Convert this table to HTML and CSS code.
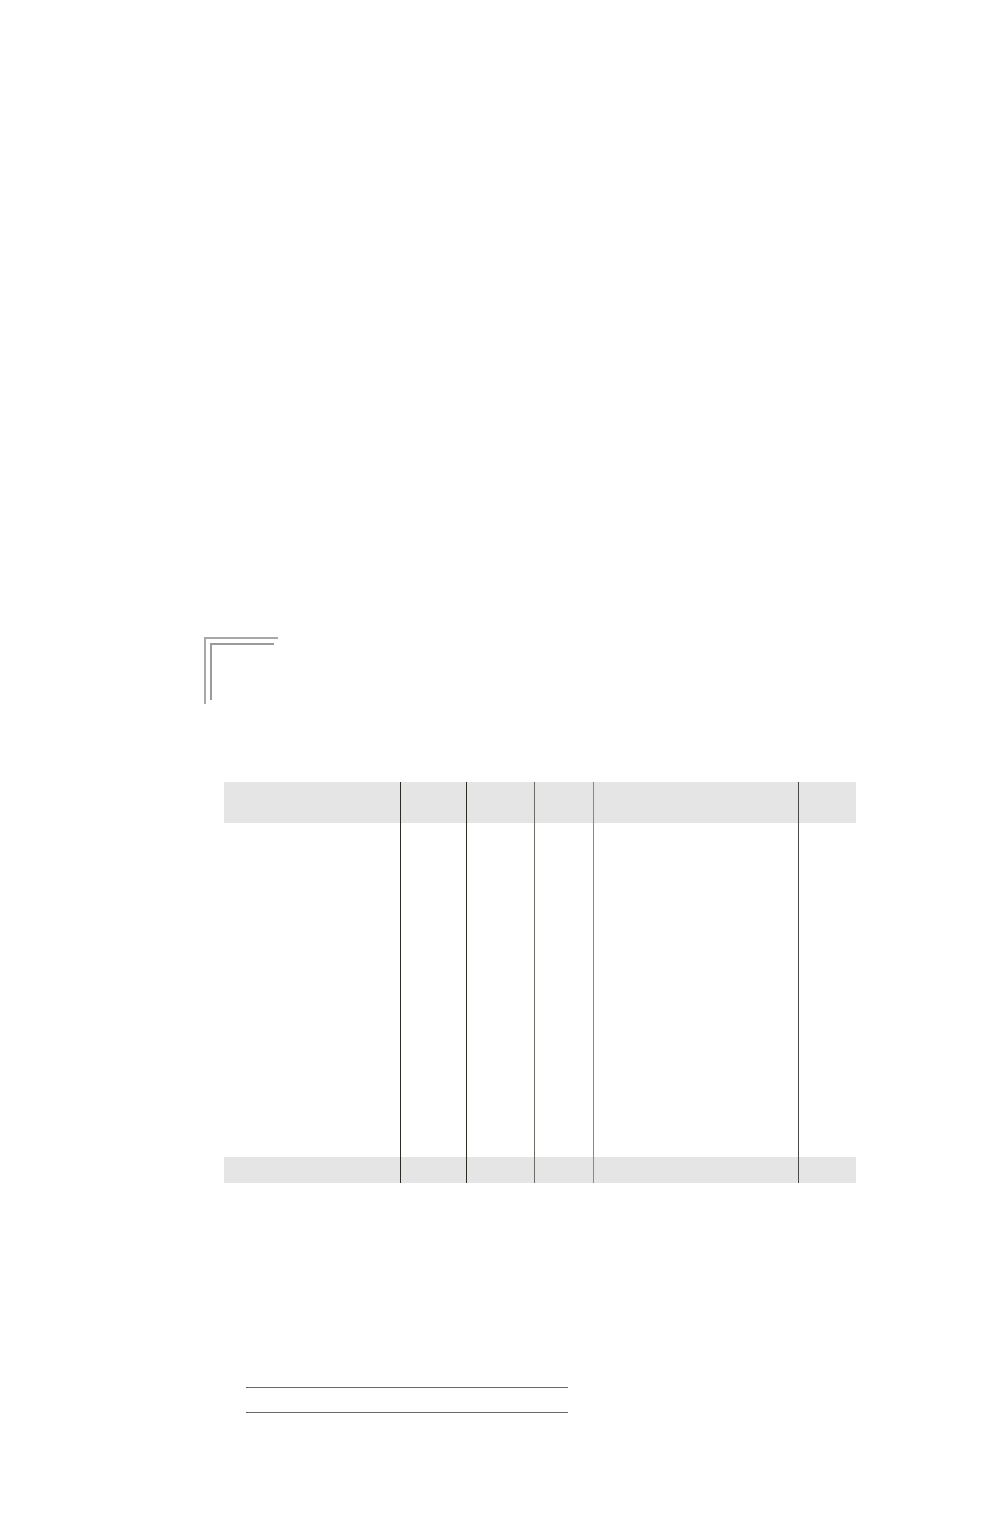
FILE: index.html
```html
<!DOCTYPE html>
<html>
<head>
<meta charset="utf-8">
<link rel="stylesheet" href="styles.css">
</head>
<body>
<div class="page">
  <div class="corner"><div class="corner-inner"></div></div>
  <table class="grid">
    <tr class="head"><td class="c1"></td><td class="c2 dk"></td><td class="c3 dk"></td><td class="c4 md"></td><td class="c5 lt"></td><td class="c6 dk2"></td></tr>
    <tr class="body"><td></td><td class="dk"></td><td class="dk"></td><td class="md"></td><td class="lt"></td><td class="dk2"></td></tr>
    <tr class="foot"><td></td><td class="dk"></td><td class="dk"></td><td class="md"></td><td class="lt"></td><td class="dk2"></td></tr>
  </table>
  <div class="rules">
    <div class="rule"></div>
    <div class="rule"></div>
  </div>
</div>
</body>
</html>
```
FILE: styles.css
```css
html, body {
  margin: 0;
  padding: 0;
  background: #ffffff;
  font-family: "Liberation Sans", Arial, sans-serif;
}
.page {
  width: 1000px;
  height: 1528px;
  padding-top: 637px;
  box-sizing: border-box;
}
.corner {
  margin-left: 204px;
  width: 74px;
  height: 67px;
  border-top: 2px solid #a8a8a8;
  border-left: 2px solid #a8a8a8;
  padding: 4px 0 0 4px;
  box-sizing: border-box;
}
.corner-inner {
  width: 62px;
  height: 55px;
  border-top: 2px solid #9a9a9a;
  border-left: 2px solid #9a9a9a;
}
.grid {
  margin-top: 78px;
  margin-left: 224px;
  border-collapse: collapse;
  border-spacing: 0;
  width: 632px;
}
.grid td {
  padding: 0;
}
.c1 { width: 177px; }
.c2 { width: 66px; }
.c3 { width: 67px; }
.c4 { width: 58px; }
.c5 { width: 206px; }
.c6 { width: 57px; }
.head td { background: #e5e5e5; height: 41px; }
.body td { height: 334px; background: #ffffff; }
.foot td { background: #e5e5e5; height: 26px; }
.dk { border-left: 1px solid #2e2a24; }
.md { border-left: 1px solid #6e6a64; }
.lt { border-left: 1px solid #8a8884; }
.dk2 { border-left: 1px solid #4a4846; }
.rules {
  margin-top: 204px;
  margin-left: 246px;
  width: 322px;
}
.rule {
  height: 1px;
  background: #6a6862;
  margin-bottom: 24px;
}
```
